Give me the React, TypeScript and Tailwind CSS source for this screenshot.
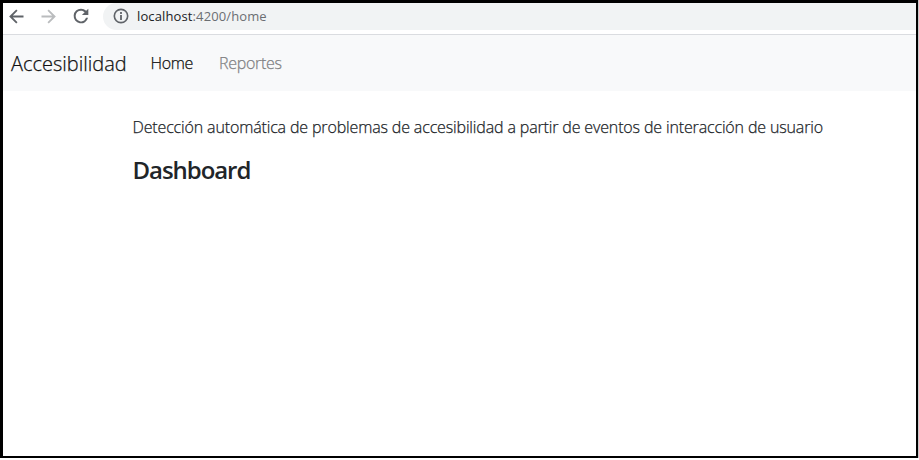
type IconProps = { path: string; className: string };

function Icon({ path, className }: IconProps) {
  return (
    <svg viewBox="0 0 24 24" fill="currentColor" className={`shrink-0 ${className}`} aria-hidden="true">
      <path d={path} />
    </svg>
  );
}

const BACK = "M20 10.75H7.83l5.34-5.34L11.7 3.9 3.6 12l8.1 8.1 1.47-1.51-5.34-5.34H20v-2.5z";
const FORWARD = "M12.3 3.9l-1.47 1.51 5.34 5.34H4v2.5h12.17l-5.34 5.34 1.47 1.51 8.1-8.1z";
const RELOAD =
  "M17.65 6.35A7.96 7.96 0 0 0 12 4a8 8 0 1 0 7.73 10h-2.3A5.8 5.8 0 1 1 12 6.2c1.6 0 3 .65 4 1.68L13 11h7V4l-2.35 2.35z";
const INFO =
  "M10.8 6.8h2.4v2.4h-2.4V6.8zm0 4h2.4v6.4h-2.4v-6.4zM12 2a10 10 0 1 0 0 20 10 10 0 0 0 0-20zm0 17.8a7.8 7.8 0 1 1 0-15.6 7.8 7.8 0 0 1 0 15.6z";

export default function App() {
  return (
    <div className="h-[458px] w-[919px] border-r border-[#c8c8c8] bg-white font-['Open_Sans','Noto_Sans',sans-serif]">
      <div className="flex h-full flex-col border-t-[3px] border-r-2 border-b-2 border-l-[3px] border-black bg-white">
        <header className="flex h-8 items-start border-b border-[#dadce0]">
          <div className="flex h-[27px] w-[100px] items-center gap-[11px] pb-px pl-[3px] text-[#5f6368]">
            <Icon path={BACK} className="size-[21px]" />
            <Icon path={FORWARD} className="size-[21px] text-[#babcbe]" />
            <Icon path={RELOAD} className="size-[22px]" />
          </div>
          <div className="flex h-[27px] flex-1 items-center rounded-l-full bg-[#f1f3f4] pb-px pl-[9px] text-[#5f6368]">
            <Icon path={INFO} className="size-[18px]" />
            <span className="ml-[7px] text-[13px] leading-5 tracking-[0.12px] text-[#6b6e72]">
              <span className="text-[#202124]">localhost</span>:4200/home
            </span>
          </div>
        </header>
        <nav className="flex h-14 items-center bg-[#f8f9fa] font-light [-webkit-text-stroke:0.25px_currentColor]">
          <span className="w-[147.5px] pt-px pl-2 text-[20px] text-[#111111]">Accesibilidad</span>
          <span className="w-[68.5px] text-[16px] tracking-[-0.3px] text-[#111111]">Home</span>
          <span className="text-[16px] tracking-[-0.3px] text-[#808183]">Reportes</span>
        </nav>
        <main className="pt-6 pl-[129.5px] text-[#212529]">
          <p className="text-[16px] leading-6 font-light tracking-[-0.145px] whitespace-nowrap [-webkit-text-stroke:0.25px_currentColor]">
            Detección automática de problemas de accesibilidad a partir de eventos de interacción de usuario
          </p>
          <h1 className="mt-4 text-[24px] leading-[29px] font-semibold tracking-[-1.05px]">Dashboard</h1>
        </main>
      </div>
    </div>
  );
}
